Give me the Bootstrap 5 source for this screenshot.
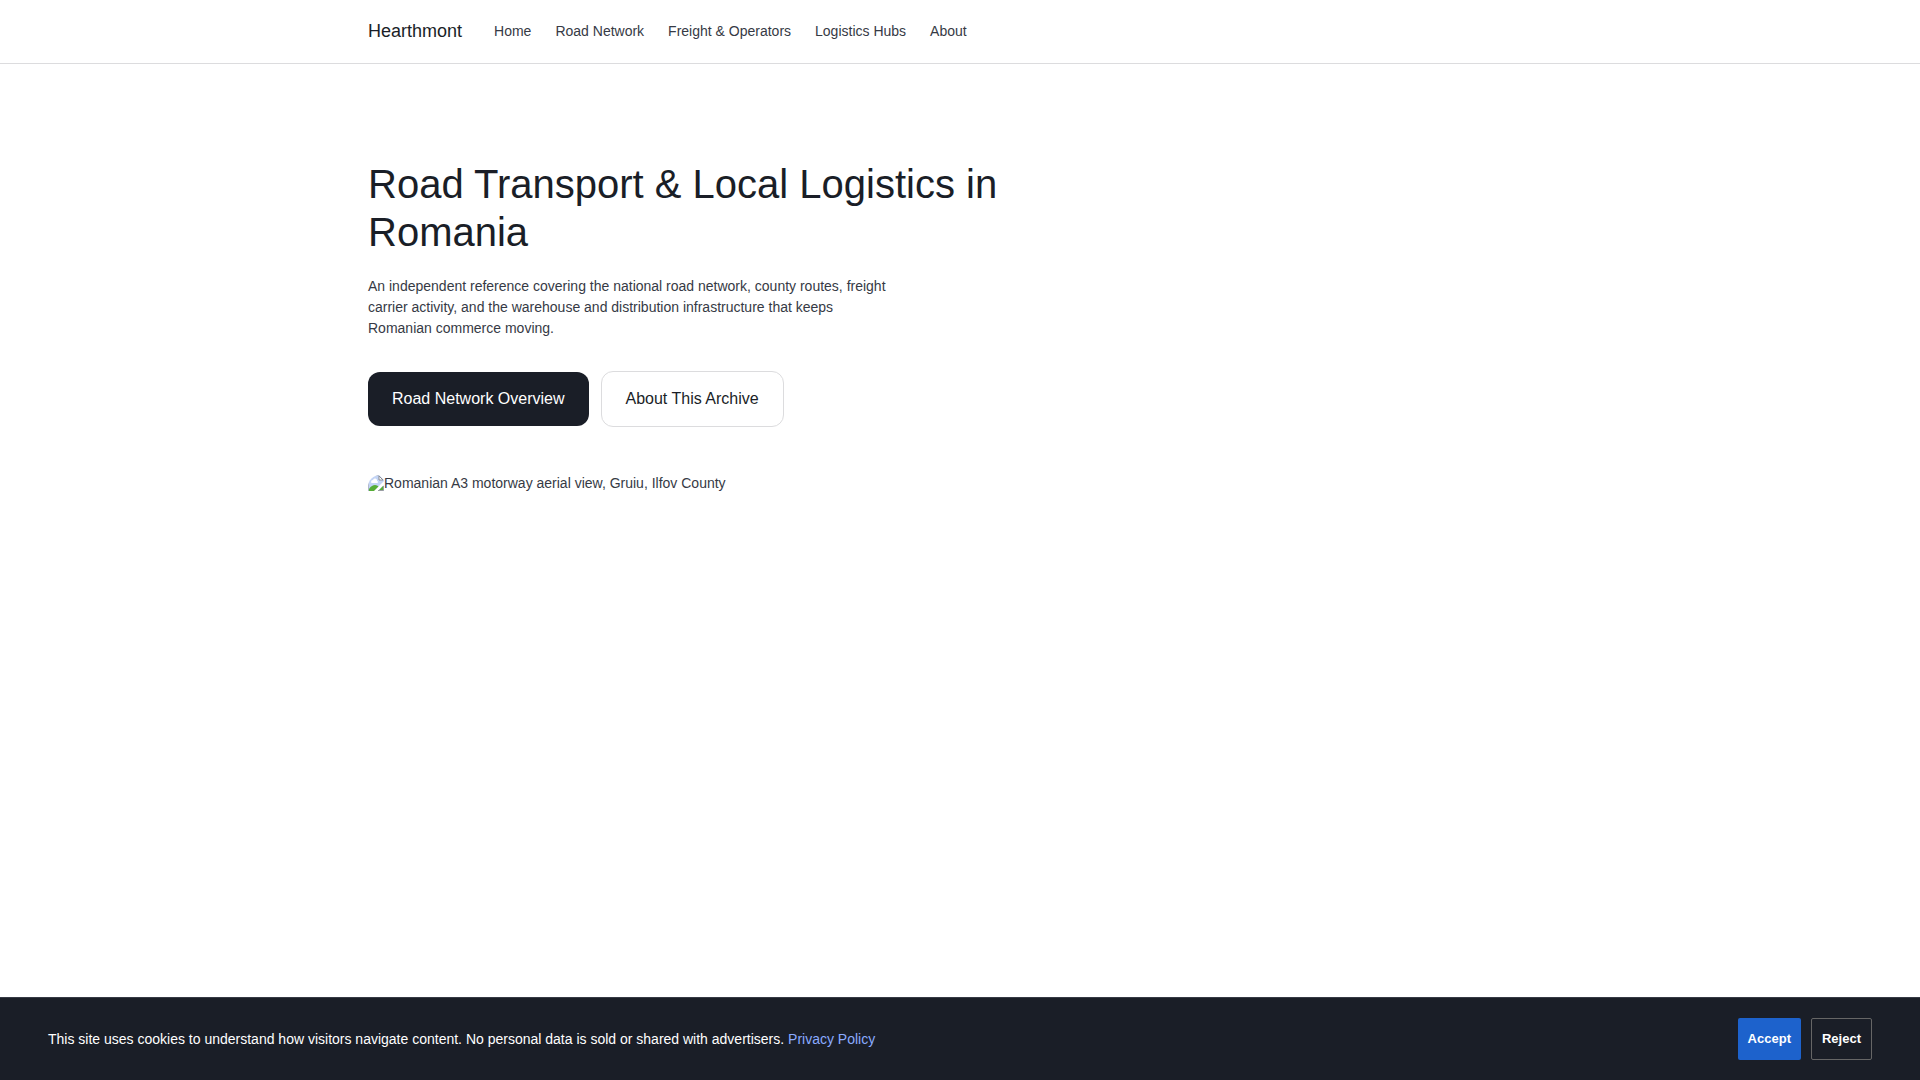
<!DOCTYPE html>
<html lang="en">
  <head>
    <meta charset="UTF-8" />
    <meta name="viewport" content="width=device-width, initial-scale=1.0" />
    <title>Hearthmont</title>
    <link
      href="https://cdn.jsdelivr.net/npm/bootstrap@5.3.3/dist/css/bootstrap.min.css"
      rel="stylesheet"
    />
    <script src="https://cdn.jsdelivr.net/npm/bootstrap@5.3.3/dist/js/bootstrap.bundle.min.js"></script>
    <style>
      body {
        font-family: "Liberation Sans", Arial, sans-serif;
        font-size: 14px;
        line-height: 21px;
        color: #363a45;
        background: #fff;
      }

      .site-wrap {
        max-width: 1280px;
        padding-left: 48px;
        padding-right: 48px;
      }

      .site-header {
        --bs-navbar-padding-y: 18px;
        --bs-navbar-nav-link-padding-x: 0;
        border-bottom: 1px solid #dcdcde;
      }

      .site-header .navbar-brand {
        font-size: 18px;
        line-height: 27px;
        padding: 0;
        margin-right: 32px;
        color: #1a1e27;
      }

      .site-header .navbar-nav {
        gap: 24px;
      }

      .site-header .navbar-nav .nav-link {
        padding: 0;
        color: #363a45;
      }

      .hero {
        padding-top: 96px;
        padding-bottom: 96px;
      }

      .hero h1 {
        max-width: 720px;
        margin-bottom: 20px;
        font-size: 40px;
        line-height: 48px;
        font-weight: 400;
        color: #1a1e27;
      }

      .hero-text {
        max-width: 520px;
        margin-bottom: 32px;
      }

      .hero-actions {
        gap: 12px;
        margin-bottom: 48px;
      }

      .hero-actions .btn {
        --bs-btn-padding-x: 24px;
        --bs-btn-padding-y: 15px;
        --bs-btn-font-size: 16px;
        --bs-btn-line-height: 24px;
        --bs-btn-border-radius: 12px;
      }

      .btn-ink {
        --bs-btn-color: #fff;
        --bs-btn-bg: #1a1e27;
        --bs-btn-hover-color: #fff;
        --bs-btn-hover-bg: #363a45;
        --bs-btn-border-width: 0;
      }

      .btn-line {
        --bs-btn-color: #1a1e27;
        --bs-btn-border-color: #dcdcde;
        --bs-btn-hover-bg: #f5f5f6;
        --bs-btn-hover-border-color: #dcdcde;
      }

      .hero-figure {
        line-height: 16px;
        border-radius: 12px 12px 0 0;
        overflow: hidden;
      }

      .cookie-bar {
        padding: 20px 48px;
        background: #1a1e27;
        border-top: 1px solid #363a45;
        color: #fff;
      }

      .cookie-bar a {
        color: #8aabff;
      }

      .cookie-actions {
        gap: 10px;
      }

      .cookie-bar .btn {
        --bs-btn-padding-x: 10px;
        --bs-btn-padding-y: 10px;
        --bs-btn-font-size: 13px;
        --bs-btn-font-weight: 700;
        --bs-btn-line-height: 20px;
        --bs-btn-border-radius: 2px;
        --bs-btn-color: #fff;
        --bs-btn-hover-color: #fff;
      }

      .btn-accept {
        --bs-btn-bg: #1d62cc;
        --bs-btn-border-width: 0;
        --bs-btn-hover-bg: #1753b0;
      }

      .btn-reject {
        --bs-btn-border-color: #666;
        --bs-btn-hover-border-color: #999;
      }
    </style>
  </head>
  <body>
    <header>
      <nav class="navbar navbar-expand site-header">
        <div class="container-fluid site-wrap justify-content-start">
          <a class="navbar-brand" href="#">Hearthmont</a>
          <ul class="navbar-nav flex-wrap">
            <li class="nav-item"><a class="nav-link" href="#">Home</a></li>
            <li class="nav-item"><a class="nav-link" href="#">Road Network</a></li>
            <li class="nav-item"><a class="nav-link" href="#">Freight &amp; Operators</a></li>
            <li class="nav-item"><a class="nav-link" href="#">Logistics Hubs</a></li>
            <li class="nav-item"><a class="nav-link" href="#">About</a></li>
          </ul>
        </div>
      </nav>
    </header>

    <main class="container-fluid site-wrap hero">
      <h1>Road Transport &amp; Local Logistics in Romania</h1>
      <p class="hero-text">
        An independent reference covering the national road network, county
        routes, freight carrier activity, and the warehouse and distribution
        infrastructure that keeps Romanian commerce moving.
      </p>
      <div class="hero-actions d-flex flex-wrap align-items-center">
        <a class="btn btn-ink" href="#">Road Network Overview</a>
        <a class="btn btn-line" href="#">About This Archive</a>
      </div>
      <div class="hero-figure d-flex">
        <svg class="flex-shrink-0" width="16" height="16" viewBox="0 0 16 16" aria-hidden="true">
          <path d="M0 0h11l5 5v11H0z" fill="#c3d4f5" />
          <path d="M0 16V0h11" fill="none" stroke="#9a9da2" />
          <path d="M11 1v4h4z" fill="#fff" stroke="#8b8e93" />
          <path d="M3 7a2 2 0 0 1 2-2 2 2 0 0 1 4 1 1 1 0 0 1 0 2H4a1 1 0 0 1-1-1z" fill="#fff" />
          <path d="M1 16v-2c2-3 4-4 6-4s3 1 4 2l-4 4z" fill="#56ad36" />
          <path d="M6 16L16 6v4l-6 6z" fill="#fff" />
          <path d="M11 15l4-4v4z" fill="#56ad36" />
          <path d="M10 15.500h5.500V11" fill="none" stroke="#9a9da2" />
        </svg>
        <span>Romanian A3 motorway aerial view, Gruiu, Ilfov County</span>
      </div>
    </main>

    <div class="cookie-bar fixed-bottom d-flex flex-wrap align-items-center justify-content-between gap-3">
      <p class="mb-0">
        This site uses cookies to understand how visitors navigate content. No
        personal data is sold or shared with advertisers.
        <a class="text-decoration-none" href="#">Privacy Policy</a>
      </p>
      <div class="cookie-actions d-flex">
        <button type="button" class="btn btn-accept">Accept</button>
        <button type="button" class="btn btn-reject">Reject</button>
      </div>
    </div>
  </body>
</html>
